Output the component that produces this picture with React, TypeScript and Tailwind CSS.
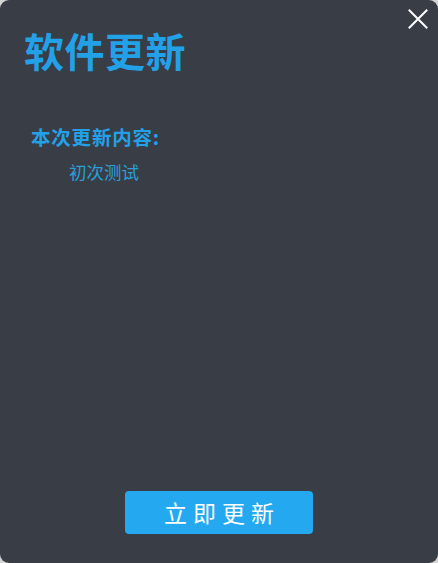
import React from "react";

export default function App() {
  return (
    <div className="w-[438px] h-[563px] bg-[#d4d4d4]" style={{ fontFamily: '"Noto Sans CJK SC", "Noto Sans", sans-serif' }}>
      <div className="relative w-full h-full rounded-[9px] bg-[#393d46] flex flex-col">
        <button className="absolute right-[9px] top-[8px] w-[22px] h-[22px] flex items-center justify-center">
          <svg width="20" height="20" viewBox="0 0 20 20" fill="none" stroke="#ffffff" strokeWidth="2" strokeLinecap="square">
            <path d="M1.5 1.5 L18.5 18.5 M18.5 1.5 L1.5 18.5" />
          </svg>
        </button>
        <h1 className="pl-[24px] pt-[24px] text-[40px] leading-[52px] font-bold text-[#23a1e8] tracking-[0.5px]">软件更新</h1>
        <div className="pl-[31px] pt-[48px] text-[19.5px] leading-[26px] font-bold text-[#23a1e8] tracking-[0.8px]">本次更新内容:</div>
        <div className="pl-[69px] pt-[10px] text-[17.5px] leading-[24px] text-[#2a9fd8]">初次测试</div>
        <div className="flex-1" />
        <div className="flex justify-center pb-[29px]">
          <button className="w-[188px] h-[43px] rounded-[4px] bg-[#24a8f0] text-white text-[23px] tracking-[6px] flex items-center justify-center pl-[6px]">
            立即更新
          </button>
        </div>
      </div>
    </div>
  );
}
